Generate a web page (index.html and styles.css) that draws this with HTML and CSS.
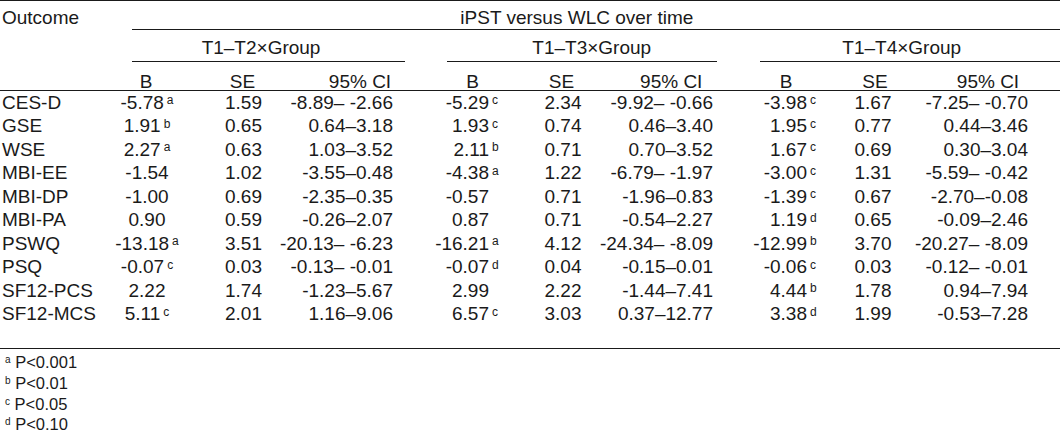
FILE: index.html
```html
<!DOCTYPE html>
<html lang="en">
<head>
<meta charset="utf-8">
<title>iPST versus WLC over time</title>
<link rel="stylesheet" href="styles.css">
</head>
<body>
<div class="table">
  <div class="row head1">
    <div class="outcome">Outcome</div>
    <div class="overall">iPST versus WLC over time</div>
  </div>
  <div class="row head2">
    <div></div>
    <div class="grp g1">T1–T2×Group</div>
    <div class="grp g2">T1–T3×Group</div>
    <div class="grp g3">T1–T4×Group</div>
  </div>
  <div class="row head3">
    <div></div>
    <div>B</div><div>SE</div><div>95% CI</div>
    <div>B</div><div>SE</div><div>95% CI</div>
    <div>B</div><div>SE</div><div>95% CI</div>
  </div>
  <div class="body">
    <div class="row data">
      <div>CES-D</div>
      <div><span>-5.78</span><sup>a</sup></div><div>1.59</div><div>-8.89– -2.66</div>
      <div><span>-5.29</span><sup>c</sup></div><div>2.34</div><div>-9.92– -0.66</div>
      <div><span>-3.98</span><sup>c</sup></div><div>1.67</div><div>-7.25– -0.70</div>
    </div>
    <div class="row data">
      <div>GSE</div>
      <div><span>1.91</span><sup>b</sup></div><div>0.65</div><div>0.64–3.18</div>
      <div><span>1.93</span><sup>c</sup></div><div>0.74</div><div>0.46–3.40</div>
      <div><span>1.95</span><sup>c</sup></div><div>0.77</div><div>0.44–3.46</div>
    </div>
    <div class="row data">
      <div>WSE</div>
      <div><span>2.27</span><sup>a</sup></div><div>0.63</div><div>1.03–3.52</div>
      <div><span>2.11</span><sup>b</sup></div><div>0.71</div><div>0.70–3.52</div>
      <div><span>1.67</span><sup>c</sup></div><div>0.69</div><div>0.30–3.04</div>
    </div>
    <div class="row data">
      <div>MBI-EE</div>
      <div><span>-1.54</span><sup></sup></div><div>1.02</div><div>-3.55–0.48</div>
      <div><span>-4.38</span><sup>a</sup></div><div>1.22</div><div>-6.79– -1.97</div>
      <div><span>-3.00</span><sup>c</sup></div><div>1.31</div><div>-5.59– -0.42</div>
    </div>
    <div class="row data">
      <div>MBI-DP</div>
      <div><span>-1.00</span><sup></sup></div><div>0.69</div><div>-2.35–0.35</div>
      <div><span>-0.57</span><sup></sup></div><div>0.71</div><div>-1.96–0.83</div>
      <div><span>-1.39</span><sup>c</sup></div><div>0.67</div><div>-2.70–-0.08</div>
    </div>
    <div class="row data">
      <div>MBI-PA</div>
      <div><span>0.90</span><sup></sup></div><div>0.59</div><div>-0.26–2.07</div>
      <div><span>0.87</span><sup></sup></div><div>0.71</div><div>-0.54–2.27</div>
      <div><span>1.19</span><sup>d</sup></div><div>0.65</div><div>-0.09–2.46</div>
    </div>
    <div class="row data">
      <div>PSWQ</div>
      <div><span>-13.18</span><sup>a</sup></div><div>3.51</div><div>-20.13– -6.23</div>
      <div><span>-16.21</span><sup>a</sup></div><div>4.12</div><div>-24.34– -8.09</div>
      <div><span>-12.99</span><sup>b</sup></div><div>3.70</div><div>-20.27– -8.09</div>
    </div>
    <div class="row data">
      <div>PSQ</div>
      <div><span>-0.07</span><sup>c</sup></div><div>0.03</div><div>-0.13– -0.01</div>
      <div><span>-0.07</span><sup>d</sup></div><div>0.04</div><div>-0.15–0.01</div>
      <div><span>-0.06</span><sup>c</sup></div><div>0.03</div><div>-0.12– -0.01</div>
    </div>
    <div class="row data">
      <div>SF12-PCS</div>
      <div><span>2.22</span><sup></sup></div><div>1.74</div><div>-1.23–5.67</div>
      <div><span>2.99</span><sup></sup></div><div>2.22</div><div>-1.44–7.41</div>
      <div><span>4.44</span><sup>b</sup></div><div>1.78</div><div>0.94–7.94</div>
    </div>
    <div class="row data">
      <div>SF12-MCS</div>
      <div><span>5.11</span><sup>c</sup></div><div>2.01</div><div>1.16–9.06</div>
      <div><span>6.57</span><sup>c</sup></div><div>3.03</div><div>0.37–12.77</div>
      <div><span>3.38</span><sup>d</sup></div><div>1.99</div><div>-0.53–7.28</div>
    </div>
  </div>
</div>
<div class="notes">
  <p><sup>a</sup> P&lt;0.001</p>
  <p><sup>b</sup> P&lt;0.01</p>
  <p><sup>c</sup> P&lt;0.05</p>
  <p><sup>d</sup> P&lt;0.10</p>
</div>
</body>
</html>
```
FILE: styles.css
```css
html, body {
  margin: 0;
  padding: 0;
  background: #ffffff;
  overflow: hidden;
}

body {
  width: 1060px;
  color: #1a1a1a;
  font-family: "Liberation Sans Narrow", "Liberation Sans", Arial, sans-serif;
  font-size: 19px;
}

.table {
  border-top: 1px solid #1a1a1a;
  border-bottom: 1px solid #1a1a1a;
}

.row {
  display: grid;
  grid-template-columns: 98px 96px 106px 115px 102px 99px 112.5px 102px 101px 128.5px;
  white-space: nowrap;
}

/* header row 1 */
.head1 {
  height: 29px;
}
.head1 > div {
  display: flex;
  align-items: center;
  padding-top: 5px;
  box-sizing: border-box;
}
.outcome {
  padding-left: 2px;
}
.overall {
  grid-column: 2 / -1;
  margin-left: 33.7px;
  justify-content: center;
  padding-right: 38px;
  border-bottom: 1px solid #1a1a1a;
}

/* header row 2 */
.head2 {
  height: 32px;
}
.grp {
  display: flex;
  align-items: center;
  justify-content: center;
  box-sizing: border-box;
  padding-top: 4px;
  border-bottom: 1px solid #1a1a1a;
}
.g1 {
  grid-column: 2 / 5;
  margin-left: 33.7px;
  margin-right: 10px;
  padding-right: 14.6px;
}
.g2 {
  grid-column: 5 / 8;
  margin-left: 32.3px;
  margin-right: 11.2px;
  padding-left: 18.8px;
}
.g3 {
  grid-column: 8 / 11;
  margin-left: 31.5px;
  padding-right: 16.6px;
}

/* header row 3 */
.head3 {
  height: 29px;
  border-bottom: 1px solid #1a1a1a;
  box-sizing: border-box;
}
.head3 > div {
  display: flex;
  align-items: center;
  justify-content: center;
  padding-top: 9px;
  box-sizing: border-box;
}
.head3 > :nth-child(3) { padding-right: 9px; }
.head3 > :nth-child(4) { padding-left: 5px; }
.head3 > :nth-child(5) { padding-left: 13px; }
.head3 > :nth-child(6) { padding-right: 10px; }
.head3 > :nth-child(7) { padding-right: 2px; }
.head3 > :nth-child(8) { padding-left: 13px; }
.head3 > :nth-child(9) { padding-right: 12px; }
.head3 > :nth-child(10) { padding-right: 15.5px; }

/* body */
.body {
  padding-bottom: 22px;
}
.data {
  height: 23.5px;
}
.data > div {
  display: flex;
  align-items: center;
  box-sizing: border-box;
}
.data > :nth-child(1) { padding-left: 2px; }

/* B columns: number right aligned, footnote letter hangs after */
.data > :nth-child(3n+2) {
  justify-content: flex-end;
}
.data sup {
  display: inline-block;
  width: 11px;
  padding-left: 3px;
  box-sizing: border-box;
  font-size: 12px;
  line-height: 1;
  align-self: flex-start;
  margin-top: 3px;
}
/* first group: value and letter centred together */
.data > :nth-child(2) {
  justify-content: center;
  padding-left: 2px;
}
.data > :nth-child(2) sup {
  width: auto;
}
.data > :nth-child(2) sup:empty {
  display: none;
}
.data > :nth-child(5) { padding-right: 17px; }
.data > :nth-child(8) { padding-right: 12.5px; }

/* SE columns: centred */
.data > :nth-child(3),
.data > :nth-child(6),
.data > :nth-child(9) {
  justify-content: center;
}
.data > :nth-child(3) { padding-right: 7px; }
.data > :nth-child(6) { padding-right: 7px; }
.data > :nth-child(9) { padding-right: 16px; }

/* CI columns: right aligned */
.data > :nth-child(4),
.data > :nth-child(7),
.data > :nth-child(10) {
  justify-content: flex-end;
}
.data > :nth-child(4) { padding-right: 22px; }
.data > :nth-child(7) { padding-right: 15.5px; }
.data > :nth-child(10) { padding-right: 32px; }

/* footnotes */
.notes {
  padding-top: 3px;
  padding-left: 5px;
  font-size: 16.5px;
}
.notes p {
  margin: 0;
  height: 20.8px;
  line-height: 20.8px;
  white-space: nowrap;
}
.notes sup {
  font-size: 10px;
  vertical-align: 5.5px;
  line-height: 0;
}
```
